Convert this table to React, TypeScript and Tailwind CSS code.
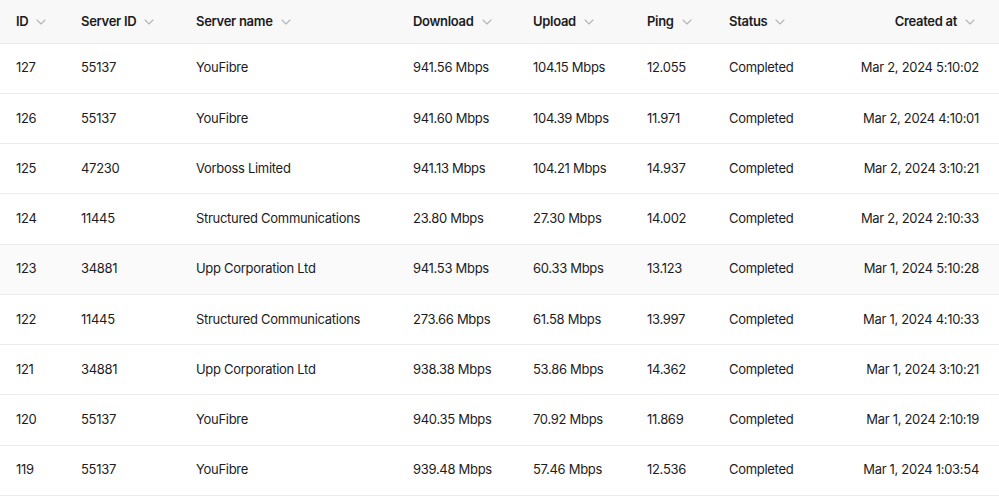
const rows = [
  ["127", "55137", "YouFibre", "941.56 Mbps", "104.15 Mbps", "12.055", "Completed", "Mar 2, 2024 5:10:02"],
  ["126", "55137", "YouFibre", "941.60 Mbps", "104.39 Mbps", "11.971", "Completed", "Mar 2, 2024 4:10:01"],
  ["125", "47230", "Vorboss Limited", "941.13 Mbps", "104.21 Mbps", "14.937", "Completed", "Mar 2, 2024 3:10:21"],
  ["124", "11445", "Structured Communications", "23.80 Mbps", "27.30 Mbps", "14.002", "Completed", "Mar 2, 2024 2:10:33"],
  ["123", "34881", "Upp Corporation Ltd", "941.53 Mbps", "60.33 Mbps", "13.123", "Completed", "Mar 1, 2024 5:10:28"],
  ["122", "11445", "Structured Communications", "273.66 Mbps", "61.58 Mbps", "13.997", "Completed", "Mar 1, 2024 4:10:33"],
  ["121", "34881", "Upp Corporation Ltd", "938.38 Mbps", "53.86 Mbps", "14.362", "Completed", "Mar 1, 2024 3:10:21"],
  ["120", "55137", "YouFibre", "940.35 Mbps", "70.92 Mbps", "11.869", "Completed", "Mar 1, 2024 2:10:19"],
  ["119", "55137", "YouFibre", "939.48 Mbps", "57.46 Mbps", "12.536", "Completed", "Mar 1, 2024 1:03:54"],
];

const columns = [
  { label: "ID", width: "w-[65px]" },
  { label: "Server ID", width: "w-[115px]" },
  { label: "Server name", width: "w-[217px]" },
  { label: "Download", width: "w-[120px]" },
  { label: "Upload", width: "w-[114px]" },
  { label: "Ping", width: "w-[82px]" },
  { label: "Status", width: "w-[110px]" },
  { label: "Created at", width: "", right: true },
];

function Chevron() {
  return (
    <svg viewBox="0 0 10 6" fill="none" className="h-[6px] w-[10px] text-[#b4b4b4] mt-[2px]">
      <path d="M1 1l4 4 4-4" stroke="currentColor" strokeWidth="1.1" strokeLinecap="round" strokeLinejoin="round" />
    </svg>
  );
}

export default function App() {
  return (
    <div className="w-[999px] h-[502px] overflow-hidden bg-white font-['Inter',sans-serif] text-[#1c1c1e] tracking-[-0.3px]">
      <table className="w-full table-fixed border-collapse text-[13px]">
        <thead>
          <tr className="bg-[#f8f8f8] border-b border-[#ececec]">
            {columns.map((c) => (
              <th
                key={c.label}
                className={`${c.width} h-[43px] px-4 font-semibold text-[13px] ${c.right ? "text-right pr-6" : "text-left"}`}
              >
                <span className={`inline-flex items-center gap-2 ${c.right ? "justify-end" : ""}`}>
                  {c.label}
                  <Chevron />
                </span>
              </th>
            ))}
          </tr>
        </thead>
        <tbody>
          {rows.map((r, i) => (
            <tr key={r[0]} className={`border-b border-[#ececec] ${i === 4 ? "bg-[#fafafa]" : ""}`}>
              {r.map((cell, j) => (
                <td
                  key={j}
                  className={`h-[50.25px] px-4 ${j === 7 ? "text-right pr-5" : ""}`}
                >
                  {cell}
                </td>
              ))}
            </tr>
          ))}
        </tbody>
      </table>
    </div>
  );
}
